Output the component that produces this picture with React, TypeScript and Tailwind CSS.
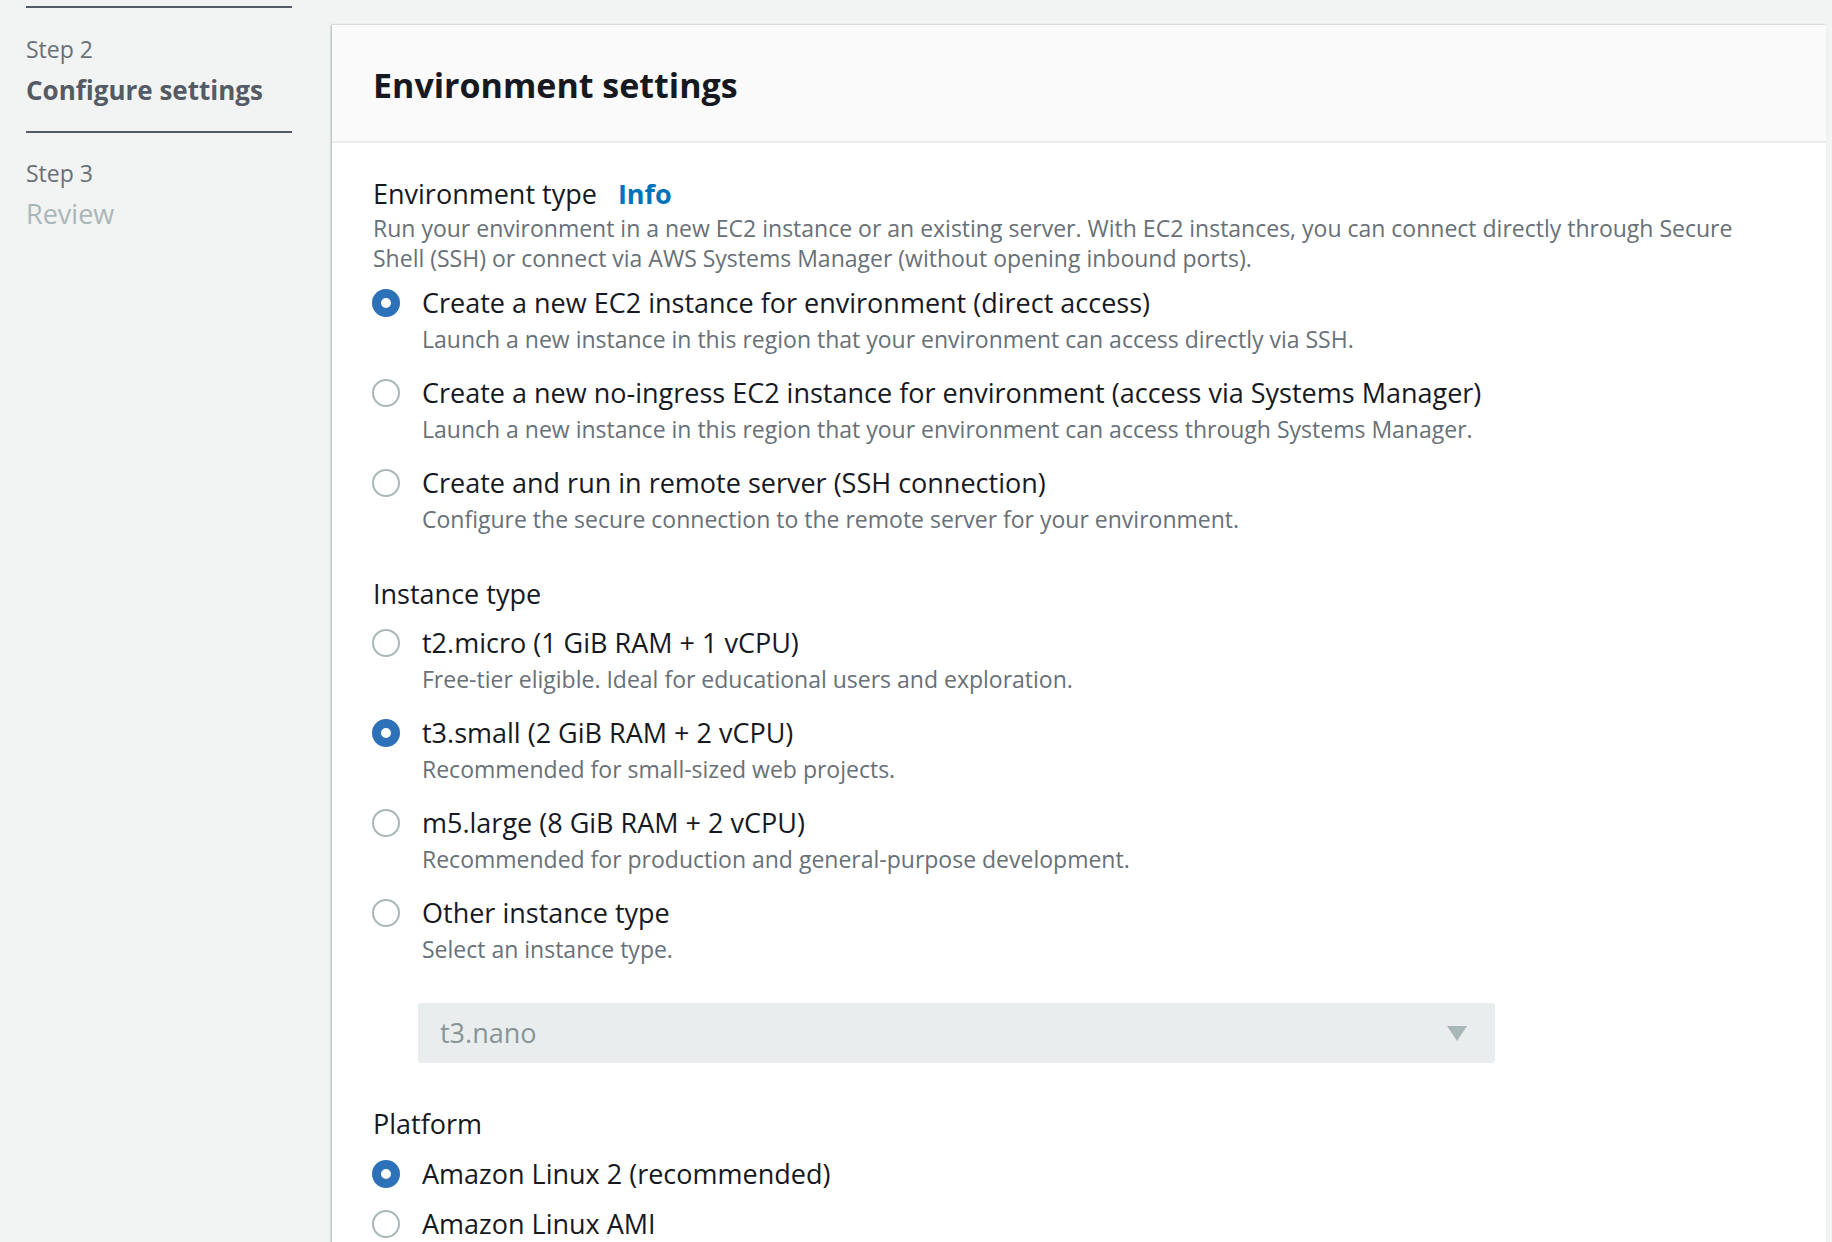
import React from 'react';

interface Option {
  label: string;
  description?: string;
  checked?: boolean;
}

const envOptions: Option[] = [
  {
    label: 'Create a new EC2 instance for environment (direct access)',
    description: 'Launch a new instance in this region that your environment can access directly via SSH.',
    checked: true,
  },
  {
    label: 'Create a new no-ingress EC2 instance for environment (access via Systems Manager)',
    description: 'Launch a new instance in this region that your environment can access through Systems Manager.',
  },
  {
    label: 'Create and run in remote server (SSH connection)',
    description: 'Configure the secure connection to the remote server for your environment.',
  },
];

const instanceOptions: Option[] = [
  { label: 't2.micro (1 GiB RAM + 1 vCPU)', description: 'Free-tier eligible. Ideal for educational users and exploration.' },
  { label: 't3.small (2 GiB RAM + 2 vCPU)', description: 'Recommended for small-sized web projects.', checked: true },
  { label: 'm5.large (8 GiB RAM + 2 vCPU)', description: 'Recommended for production and general-purpose development.' },
  { label: 'Other instance type', description: 'Select an instance type.' },
];

const platformOptions: Option[] = [
  { label: 'Amazon Linux 2 (recommended)', checked: true },
  { label: 'Amazon Linux AMI' },
];

function Radio({ checked }: { checked?: boolean }) {
  return checked ? (
    <span className="mt-[7px] -ml-[1px] w-[28px] h-[28px] rounded-full border-[9px] border-[#2d72b8] bg-white shrink-0" />
  ) : (
    <span className="mt-[7px] -ml-[1px] w-[28px] h-[28px] rounded-full border-2 border-[#aab7b8] bg-white shrink-0" />
  );
}

function RadioGroup({ options, compact }: { options: Option[]; compact?: boolean }) {
  return (
    <div className={compact ? 'flex flex-col gap-[8px]' : 'flex flex-col gap-[18px]'}>
      {options.map(o => (
        <div key={o.label} className="flex items-start gap-[22px]">
          <Radio checked={o.checked} />
          <div>
            <p className="text-[27px] leading-[42px] text-[#16191f]">{o.label}</p>
            {o.description && (
              <p className="text-[23px] leading-[30px] text-[#687078]">{o.description}</p>
            )}
          </div>
        </div>
      ))}
    </div>
  );
}

export default function App() {
  return (
    <div
      className="min-h-[1242px] bg-[#f2f3f3] flex overflow-hidden"
      style={{ fontFamily: '"Open Sans", "Noto Sans", sans-serif' }}
    >
      {/* wizard steps */}
      <aside className="w-[332px] shrink-0 pl-[26px] pr-[40px] pt-[6px]">
        <div className="border-t-2 border-[#545b64] pt-[26px] pb-[23px]">
          <p className="text-[23px] leading-[30px] text-[#687078]">Step 2</p>
          <p className="text-[26px] leading-[36px] font-bold text-[#545b64] mt-[8px]">Configure settings</p>
        </div>
        <div className="border-t-2 border-[#545b64] pt-[25px]">
          <p className="text-[23px] leading-[30px] text-[#687078]">Step 3</p>
          <p className="text-[27px] leading-[36px] text-[#aab7b8] mt-[8px]">Review</p>
        </div>
      </aside>

      <main className="flex-1 mt-[25px] mr-[6px] bg-white shadow-[-1px_0_2px_rgba(0,28,36,0.3)]">
        <div className="h-[118px] bg-[#fafafa] border-b-2 border-[#eaeded] px-[41px] flex items-center">
          <h2 className="text-[34px] font-bold text-[#16191f] pt-[4px]">Environment settings</h2>
        </div>

        <div className="px-[41px] pt-[34px] pb-[40px]">
          <div>
            <p className="text-[27px] leading-[34px] text-[#16191f]">
              Environment type
              <span className="ml-[21px] font-bold text-[#0073bb]">Info</span>
            </p>
            <p className="text-[23px] leading-[30px] text-[#687078] mt-[2px]">
              Run your environment in a new EC2 instance or an existing server. With EC2 instances, you can connect directly through Secure Shell (SSH) or connect via AWS Systems Manager (without opening inbound ports).
            </p>
            <div className="mt-[9px]">
              <RadioGroup options={envOptions} />
            </div>
          </div>

          <div className="mt-[43px]">
            <p className="text-[27px] leading-[34px] text-[#16191f]">Instance type</p>
            <div className="mt-[11px]">
              <RadioGroup options={instanceOptions} />
            </div>
            <div className="mt-[39px] ml-[45px] w-[1077px] h-[60px] rounded-[3px] bg-[#eaeded] flex items-center justify-between pl-[22px] pr-[28px]">
              <span className="text-[27px] text-[#879596]">t3.nano</span>
              <svg width="20" height="15" viewBox="0 0 20 15">
                <path d="M0 0 H20 L10 15 Z" fill="#aab7b8" />
              </svg>
            </div>
          </div>

          <div className="mt-[44px]">
            <p className="text-[27px] leading-[34px] text-[#16191f]">Platform</p>
            <div className="mt-[12px]">
              <RadioGroup options={platformOptions} compact />
            </div>
          </div>
        </div>
      </main>
    </div>
  );
}
